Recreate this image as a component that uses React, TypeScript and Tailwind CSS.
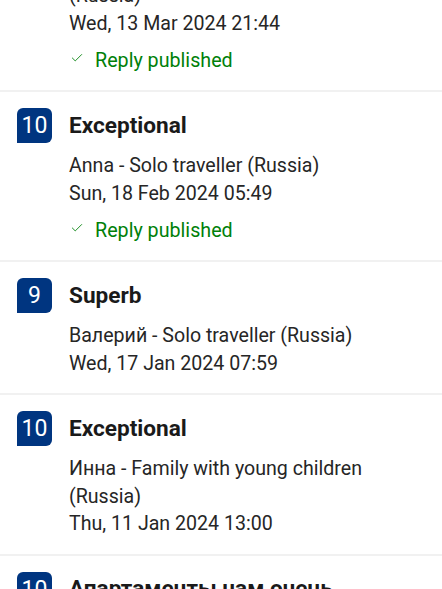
import { Check } from 'lucide-react';

type Review = {
  score?: number;
  title?: string;
  lines: string[];
  replied?: boolean;
};

const reviews: Review[] = [
  { score: 10, title: 'Exceptional', lines: ['Anna - Solo traveller (Russia)', 'Sun, 18 Feb 2024 05:49'], replied: true },
  { score: 9, title: 'Superb', lines: ['Валерий - Solo traveller (Russia)', 'Wed, 17 Jan 2024 07:59'] },
  { score: 10, title: 'Exceptional', lines: ['Инна - Family with young children (Russia)', 'Thu, 11 Jan 2024 13:00'] },
  { score: 10, title: 'Апартаменты нам очень понравились', lines: ['Ольга - Couple (Russia)', 'Mon, 8 Jan 2024 10:12'] },
];

function Replied() {
  return (
    <div className="mt-[10px] flex items-center h-[27px]">
      <Check className="w-[14px] h-[14px] ml-[1px] -mt-[5px] text-[#008009]" strokeWidth={1.5} />
      <span className="ml-[11px] text-[19.7px] text-[#008009]">Reply published</span>
    </div>
  );
}

function ReviewRow({ review }: { review: Review }) {
  return (
    <div className="flex pl-[17px] pr-[16px] pt-[16px] pb-[16px] border-b-2 border-[#f1f1f1]">
      <div className="w-[35px] h-[35px] shrink-0 bg-[#003580] rounded-t-[6px] rounded-br-[6px] flex items-center justify-center text-white text-[23px] leading-none">
        {review.score}
      </div>
      <div className="ml-[17px] flex-1 min-w-0">
        <div className="py-[3.5px] font-bold text-[22.6px] leading-[28px] text-[#1a1a1a]">
          {review.title}
        </div>
        <div className="mt-[9px] text-[19.6px] leading-[27.5px] text-[#262626]">
          {review.lines.map((l) => (
            <div key={l}>{l}</div>
          ))}
        </div>
        {review.replied && <Replied />}
      </div>
    </div>
  );
}

export default function App() {
  return (
    <div className="w-[442px] h-[589px] overflow-hidden bg-white" style={{ fontFamily: 'Roboto, "Noto Sans", sans-serif' }}>
      <div className="-mt-[18px] pl-[69px] pr-[16px] pb-[16px] border-b-2 border-[#f1f1f1]">
        <div className="text-[19.6px] leading-[27.5px] text-[#262626]">
          <div>(Russia)</div>
          <div>Wed, 13 Mar 2024 21:44</div>
        </div>
        <Replied />
      </div>
      {reviews.map((r, i) => (
        <ReviewRow key={i} review={r} />
      ))}
    </div>
  );
}
